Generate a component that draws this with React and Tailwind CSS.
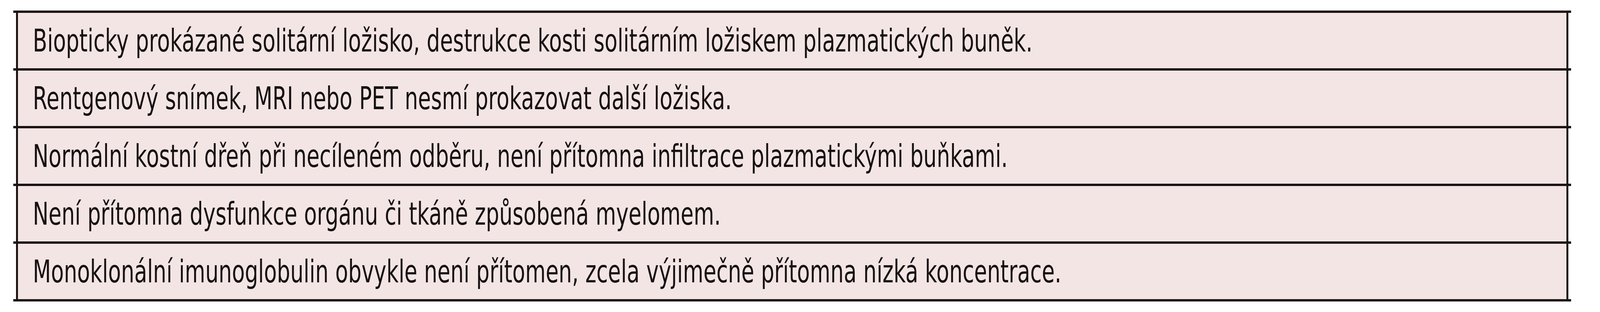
const rows = [
    'Biopticky prokázané solitární ložisko, destrukce kosti solitárním ložiskem plazmatických buněk.',
    'Rentgenový snímek, MRI nebo PET nesmí prokazovat další ložiska.',
    'Normální kostní dřeň při necíleném odběru, není přítomna infiltrace plazmatickými buňkami.',
    'Není přítomna dysfunkce orgánu či tkáně způsobená myelomem.',
    'Monoklonální imunoglobulin obvykle není přítomen, zcela výjimečně přítomna nízká koncentrace.',
]

const App = () => {
    return (
        <div className="w-full h-[800px] bg-white pt-[27px] overflow-hidden">
            {/* Criteria table */}
            <div className="ml-[34px] mr-[74px] border-b-[6px] border-[#1c1313]">
                {rows.map((text) => (
                    <div key={text} className="border-t-[6px] border-[#1c1313]">
                        <div className="mx-[7px] h-[142px] border-x-[5px] border-[#1c1313] bg-[#f4e5e5] flex items-center pl-[38px]">
                            {/* condensed face: the reference font is narrower than any installed family */}
                            <span
                                className="inline-block origin-left scale-x-[0.665] text-[81px] leading-none text-[#161111] whitespace-nowrap"
                                style={{ fontFamily: '"DejaVu Sans", sans-serif' }}
                            >
                                {text}
                            </span>
                        </div>
                    </div>
                ))}
            </div>
        </div>
    )
}

export default App
